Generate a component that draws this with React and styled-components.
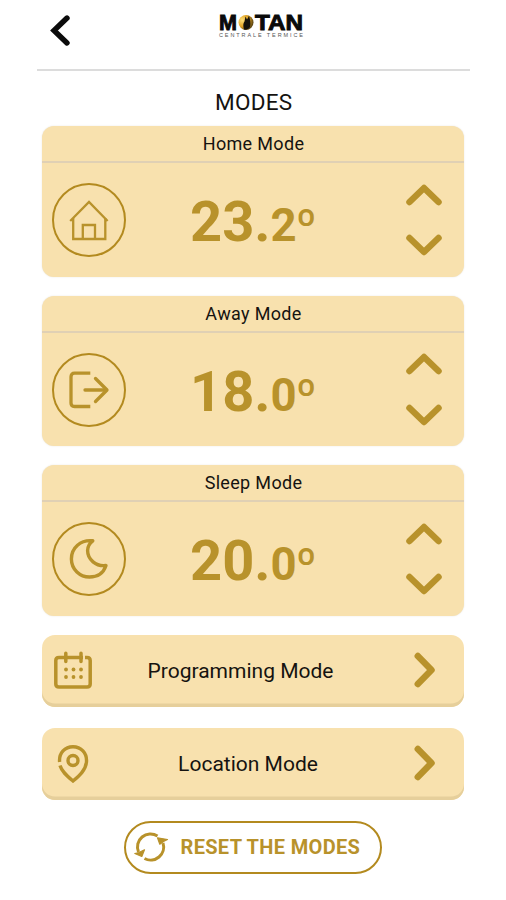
import React from "react"
import styled, { createGlobalStyle, ThemeProvider } from "styled-components"

const theme = {
  gold: "#b8922b",
  goldThin: "#b38a1f",
  sand: "#f8e1ae",
  ink: "#151310",
}

const GlobalStyle = createGlobalStyle`
  body {
    margin: 0;
    background: #fff;
    font-family: Roboto, "Liberation Sans", sans-serif;
  }
`

const Screen = styled.main`
  box-sizing: border-box;
  width: 506px;
  height: 900px;
  overflow: hidden;
`

const Header = styled.header`
  display: grid;
  grid-template-columns: 60px 1fr 60px;
  box-sizing: border-box;
  height: 70.5px;
  margin: 0 36px 0 37px;
  border-bottom: 2px solid #dcdcdc;
`

const BackButton = styled.button`
  display: flex;
  align-items: flex-start;
  padding: 14px 0 0 12px;
  border: 0;
  background: none;
`

const LogoWrapper = styled.div`
  display: flex;
  justify-content: center;
  padding-top: 10px;
  padding-left: 15px;
`

const Title = styled.h1`
  margin: 17.5px 0 10px;
  padding-left: 1.5px;
  color: ${props => props.theme.ink};
  font-size: 22.5px;
  font-weight: 400;
  line-height: 28px;
  letter-spacing: 0.3px;
  text-align: center;
`

const Content = styled.div`
  display: flex;
  flex-direction: column;
  width: 422px;
  margin-left: 42px;
`

const Card = styled.section`
  height: 150.5px;
  margin-bottom: 19px;
  border-radius: 12px;
  background: ${props => props.theme.sand};
  box-shadow: 0 0 1.5px rgba(120, 100, 60, 0.22);
`

const CardTitle = styled.h2`
  box-sizing: border-box;
  height: 37px;
  margin: 0;
  padding-left: 1px;
  border-bottom: 2px solid #e0d0b4;
  color: ${props => props.theme.ink};
  font-size: 18px;
  font-weight: 400;
  line-height: 36px;
  letter-spacing: 0.33px;
  text-align: center;
`

const CardBody = styled.div`
  display: grid;
  grid-template-columns: 148px 1fr 60px;
  height: 113px;
`

const IconCircle = styled.div`
  display: flex;
  align-items: center;
  justify-content: center;
  box-sizing: border-box;
  width: 74px;
  height: 74px;
  margin: 20px 0 0 10px;
  border: 2px solid ${props => props.theme.goldThin};
  border-radius: 50%;
`

const Temperature = styled.div`
  display: flex;
  align-items: baseline;
  padding-top: 26px;
  color: ${props => props.theme.gold};
  font-size: 56px;
  font-weight: 700;
  line-height: 66px;
`

const Decimal = styled.span`
  font-size: 45.5px;
`

const Degree = styled.span`
  margin-left: -0.5px;
  font-size: 45px;
  font-weight: 500;
`

const Stepper = styled.div`
  display: flex;
  flex-direction: column;
  align-items: center;
  gap: 28.5px;
  padding-top: 20.5px;
  padding-right: 20px;
`

const StepButton = styled.button`
  display: flex;
  padding: 0;
  border: 0;
  background: none;
`

const LinkRow = styled.a`
  display: grid;
  grid-template-columns: 62px 1fr 79px;
  align-items: center;
  box-sizing: border-box;
  height: 72.5px;
  margin-bottom: 20.5px;
  border-radius: 13px;
  background: ${props => props.theme.sand};
  box-shadow: inset 0 -3.5px 0 #e6cf9b;
  color: ${props => props.theme.ink};

  & svg {
    justify-self: center;
    margin-bottom: 2px;
  }
`

const RowLabel = styled.span`
  padding-left: ${props => props.$indent || 0}px;
  padding-right: ${props => props.$outdent || 0}px;
  font-size: 21px;
  line-height: 26px;
  text-align: center;
`

const ResetButton = styled.button`
  display: flex;
  align-items: center;
  align-self: center;
  box-sizing: border-box;
  width: 258px;
  height: 53px;
  padding: 0 0 0 8px;
  border: 2px solid ${props => props.theme.goldThin};
  border-radius: 27px;
  background: #fff;
  color: ${props => props.theme.gold};
  font-family: inherit;
  font-size: 20px;
  font-weight: 700;
  white-space: nowrap;
`

const ResetLabel = styled.span`
  margin-left: 10.5px;
  letter-spacing: 0.33px;
`

const BackIcon = () => (
  <svg width="22" height="33" viewBox="0 0 22 33" fill="none">
    <path d="M18 4L5 16.5L18 29" stroke="#0b0b0b" strokeWidth="5.400" strokeLinecap="round" />
  </svg>
)

const Logo = () => (
  <svg width="86" height="30" viewBox="0 0 86 30">
    <defs>
      <radialGradient id="flame" cx="0.25" cy="0.35" r="0.8">
        <stop offset="0" stopColor="#ffe07a" />
        <stop offset="0.5" stopColor="#e3a526" />
        <stop offset="1" stopColor="#4a380f" />
      </radialGradient>
    </defs>
    <g
      fontFamily="Liberation Sans"
      fontWeight="700"
      fontSize="21.5"
      fill="#0a0a0a"
      stroke="#0a0a0a"
      strokeWidth="0.9"
    >
      <text x="1" y="20" textLength="18" lengthAdjust="spacingAndGlyphs">M</text>
      <text x="37" y="20" textLength="48" lengthAdjust="spacingAndGlyphs">TAN</text>
    </g>
    <circle cx="28" cy="12.5" r="7.500" fill="url(#flame)" />
    <path d="M26 19.500c-1-4-1-6 .5-8l1-5 1.5 3L31 6c1 3 2 7 1 11-1.500 2.500-4 3-6 2.500z" fill="#15120b" />
    <text
      x="1"
      y="27"
      fontFamily="Liberation Sans"
      fontSize="5.500"
      fill="#555"
      textLength="84"
      lengthAdjust="spacing"
    >
      CENTRALE TERMICE
    </text>
  </svg>
)

const HomeIcon = () => (
  <svg width="42" height="42" viewBox="0 0 42 42" fill="none" stroke="#b8922b" strokeWidth="2.300">
    <path d="M2.200 22L21 3L39.600 22" />
    <path d="M5.200 19V40H37.300V19" />
    <path d="M14.800 40V26H27V40" />
  </svg>
)

const AwayIcon = () => (
  <svg width="42" height="42" viewBox="0 0 42 42" fill="none" stroke="#b8922b" strokeWidth="3.300">
    <path d="M22.300 4.200H6.500Q3 4.200 3 7.700V34Q3 37.500 6.500 37.500H22.300" />
    <path d="M17 21H38" strokeLinecap="round" />
    <path d="M27.500 9.500L39 21L27.500 32.500" strokeLinecap="round" strokeLinejoin="round" />
  </svg>
)

const MoonIcon = () => (
  <svg
    width="42"
    height="42"
    viewBox="0 0 42 42"
    fill="none"
    stroke="#b8922b"
    strokeWidth="3.400"
    strokeLinejoin="round"
  >
    <path d="M24.800 2.800C12.500 1.500 3.400 10 3.400 21C3.400 31.500 12 39 21.500 39C29.500 39 35.500 35 38 27.500C28 28.800 19.600 21.500 19.600 12.500C19.600 8.800 21.500 5.300 24.800 2.800Z" />
  </svg>
)

const ChevronIcon = ({ down }) => (
  <svg width="38" height="22" viewBox="0 0 38 22" fill="none">
    <path
      d={down ? "M4.500 4L19 18L33.500 4" : "M4.500 18L19 4L33.500 18"}
      stroke="#b8922b"
      strokeWidth="6.500"
      strokeLinecap="round"
      strokeLinejoin="round"
    />
  </svg>
)

const NextIcon = () => (
  <svg width="22" height="36" viewBox="0 0 22 36" fill="none">
    <path
      d="M3.800 4L17.500 18L3.800 32"
      stroke="#b8922b"
      strokeWidth="6.500"
      strokeLinecap="round"
      strokeLinejoin="round"
    />
  </svg>
)

const CalendarIcon = () => (
  <svg width="40" height="40" viewBox="0 0 40 40" fill="none" stroke="#b8922b" strokeWidth="3.500">
    <path d="M9 7.500H6Q2.800 7.500 2.800 10.500V34Q2.800 37 6 37H34Q37.200 37 37.200 34V10.500Q37.200 7.500 34 7.500H32" />
    <path d="M9 7.500H30" />
    <path d="M12.800 3.200V11.500M28 3.200V11.500" strokeLinecap="round" />
    <g fill="#b8922b" stroke="none">
      {[19.5, 27].map(y =>
        [13, 20.5, 28].map(x => <circle key={`${x}-${y}`} cx={x} cy={y} r="1.900" />)
      )}
    </g>
  </svg>
)

const PinIcon = () => (
  <svg width="34" height="40" viewBox="0 0 34 40" fill="none" stroke="#b8922b" strokeWidth="3.400">
    <path d="M3.600 19C2.800 10 9 3.700 17 3.700C25 3.700 31 10 30.500 18.500C30 27 23 33 17 38C11 33 6 29 4 22.500" />
    <circle cx="17" cy="17.500" r="5" />
  </svg>
)

const ResetIcon = () => (
  <svg width="36" height="32" viewBox="0 0 36 32" fill="none" stroke="#b8922b" strokeWidth="3">
    <path d="M4.500 21A13 13 0 0 1 23.500 5" />
    <path d="M29 12A13 13 0 0 1 10.500 27.500" />
    <g fill="#b8922b" strokeWidth="1.200" strokeLinejoin="round">
      <path d="M0.800 22.500L5 21.500L10.500 18.800L7.800 25.500Z" />
      <path d="M33.500 8.500L23.500 6.800L25.800 13.200L29.500 10.500Z" />
    </g>
  </svg>
)

const modes = [
  { title: "Home Mode", whole: "23.", decimal: "2", icon: <HomeIcon /> },
  { title: "Away Mode", whole: "18.", decimal: "0", icon: <AwayIcon /> },
  { title: "Sleep Mode", whole: "20.", decimal: "0", icon: <MoonIcon /> },
]

const ModeCard = ({ title, whole, decimal, icon }) => (
  <Card>
    <CardTitle>{title}</CardTitle>
    <CardBody>
      <IconCircle>{icon}</IconCircle>
      <Temperature>
        <span>{whole}</span>
        <Decimal>{decimal}</Decimal>
        <Degree>º</Degree>
      </Temperature>
      <Stepper>
        <StepButton>
          <ChevronIcon />
        </StepButton>
        <StepButton>
          <ChevronIcon down />
        </StepButton>
      </Stepper>
    </CardBody>
  </Card>
)

const App = () => (
  <ThemeProvider theme={theme}>
    <GlobalStyle />
    <Screen>
      <Header>
        <BackButton>
          <BackIcon />
        </BackButton>
        <LogoWrapper>
          <Logo />
        </LogoWrapper>
      </Header>
      <Title>MODES</Title>
      <Content>
        {modes.map(mode => (
          <ModeCard key={mode.title} {...mode} />
        ))}
        <LinkRow>
          <CalendarIcon />
          <RowLabel $outdent={8}>Programming Mode</RowLabel>
          <NextIcon />
        </LinkRow>
        <LinkRow>
          <PinIcon />
          <RowLabel $indent={7}>Location Mode</RowLabel>
          <NextIcon />
        </LinkRow>
        <ResetButton>
          <ResetIcon />
          <ResetLabel>RESET THE MODES</ResetLabel>
        </ResetButton>
      </Content>
    </Screen>
  </ThemeProvider>
)

export default App
